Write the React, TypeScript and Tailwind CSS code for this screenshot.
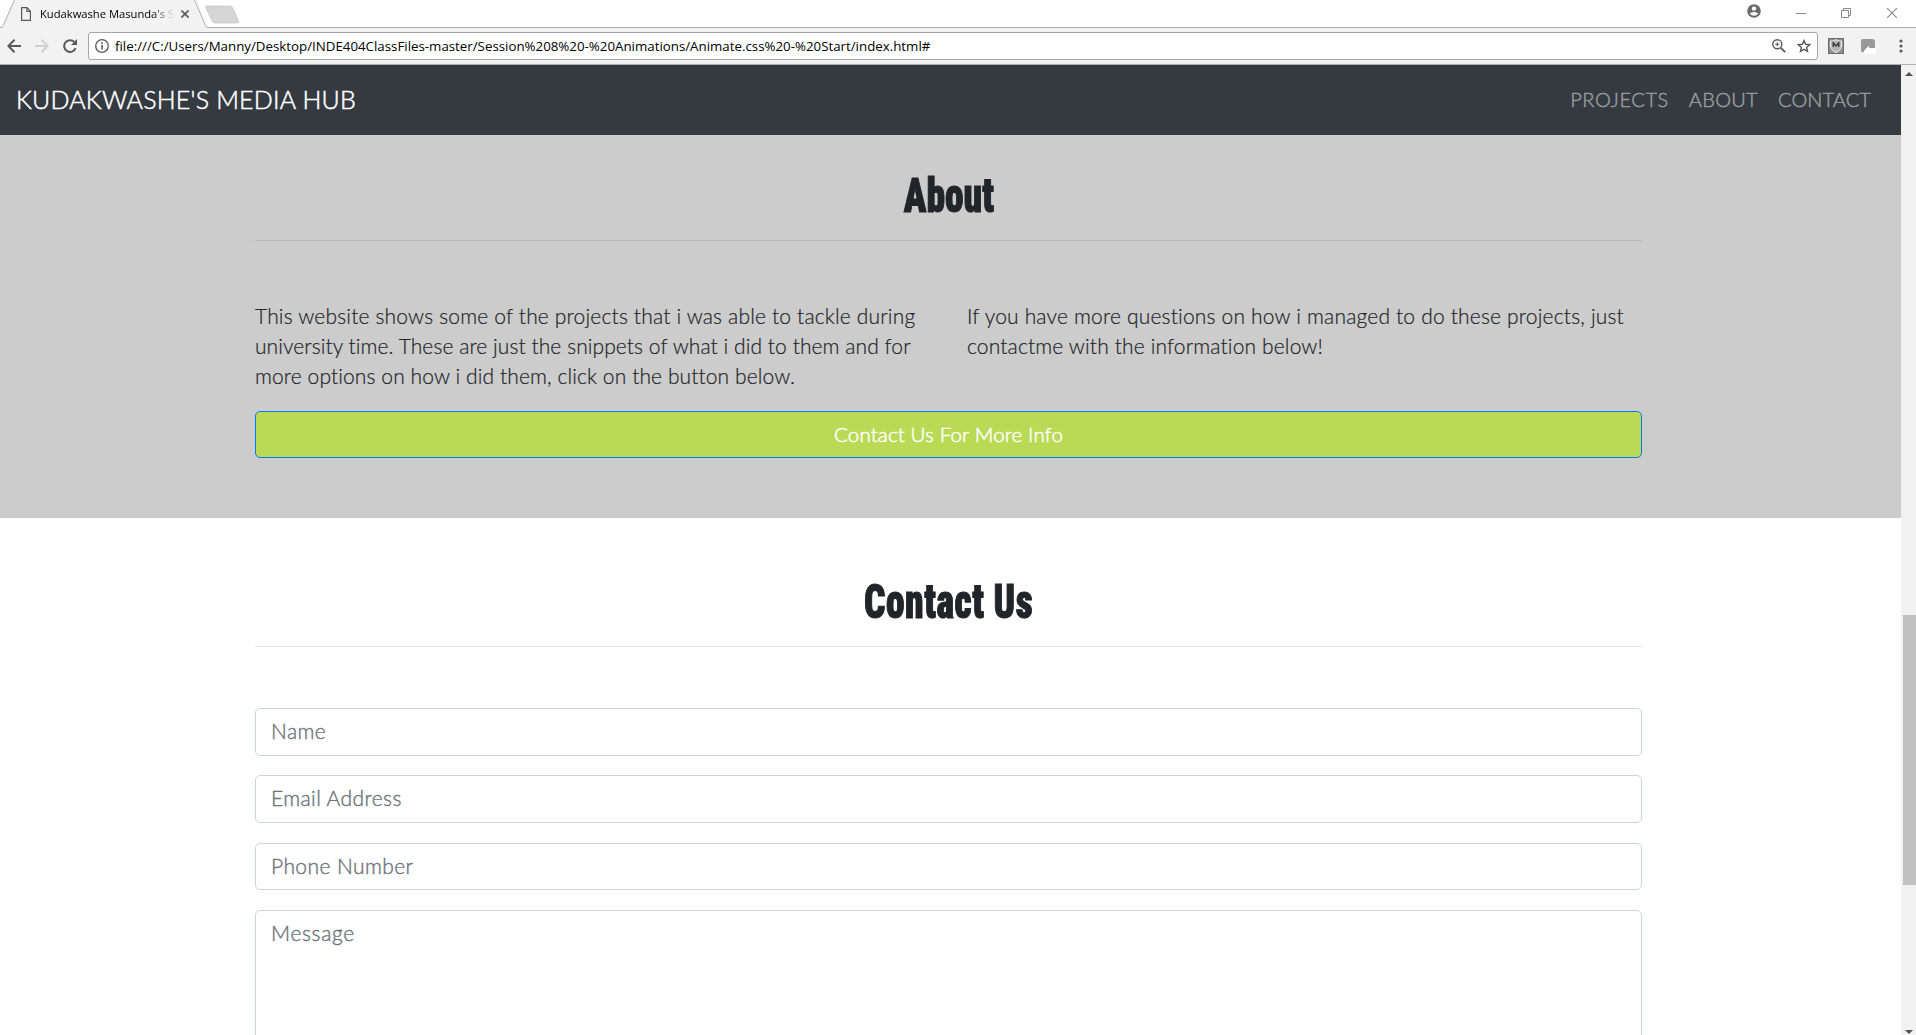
import type { ReactNode } from 'react';

function TabStrip() {
  return (
    <div className="relative flex h-7 shrink-0 items-start border-b border-[#adadad] bg-white">
      <div className="relative h-7 w-[208px]">
        <svg className="absolute left-0 top-0" width="208" height="28" viewBox="0 0 208 28" fill="none">
          <path d="M0 27.5H1.5Q2.6 27.3 3 26L13.5 2Q14.3 .3 15.5 -1H193.5Q194.8 .3 195.5 2L205.5 25.5Q206.3 27.5 208 27.5V29H0Z" fill="#f2f2f2" />
          <path d="M0 27.5H1Q2.3 27.3 3 26L13.5 2Q14.3 .3 15.5 -1M193.5 -1Q194.8 .3 195.5 2L205.5 25.5Q206.3 27.5 208 27.5" stroke="#adadad" />
        </svg>
        <div className="relative flex h-7 items-center pl-[21px]">
          <svg width="10" height="14" viewBox="0 0 10 14" fill="none" stroke="#5a5a5a" strokeWidth="1.2">
            <path d="M.6 .6H6L9.4 4.2V13.4H.6ZM5.9 .6V4.4H9.4" />
          </svg>
          <span className="ml-[9px] w-[134px] overflow-hidden whitespace-nowrap font-['Open_Sans'] text-[11.2px] leading-5 text-black [mask-image:linear-gradient(to_right,black_84%,transparent)]">
            Kudakwashe Masunda's S
          </span>
          <svg className="ml-[7px]" width="8" height="8" viewBox="0 0 8 8" stroke="#5a5a5a" strokeWidth="1.6">
            <path d="M.4 .4L7.6 7.6M7.6 .4L.4 7.6" />
          </svg>
        </div>
      </div>
      <svg className="-ml-[4px] mt-[5px]" width="36" height="19" viewBox="0 0 36 19">
        <path d="M2.5 1H26Q28 1 28.8 2.8L34.6 16Q35.3 18 33.5 18H11Q9 18 8.2 16.2L1.5 2.5Q1 1 2.5 1Z" fill="#d6d6d6" stroke="#c6c6c6" strokeWidth=".7" />
      </svg>
      <div className="ml-auto flex h-[26px] items-center">
        <svg className="-mt-[4px]" width="14" height="14" viewBox="0 0 14 14">
          <circle cx="7" cy="7" r="6.8" fill="#6b6b6b" />
          <circle cx="7" cy="4.6" r="2.2" fill="#fff" />
          <path d="M2.8 9.5Q4 7.9 7 7.9T11.2 9.5Q9.7 11.8 7 11.8T2.8 9.5Z" fill="#fff" />
        </svg>
        <svg className="ml-[35px]" width="10" height="11" viewBox="0 0 10 11"><path d="M0 5.5H10" stroke="#8c8c8c" /></svg>
        <svg className="ml-[35px]" width="10" height="10" viewBox="0 0 10 10" fill="none" stroke="#8c8c8c">
          <path d="M.5 2.5H7.5V9.5H.5ZM2.5 2.5V.5H9.5V7.5H7.5" />
        </svg>
        <svg className="ml-[36px] mr-[19px]" width="10" height="10" viewBox="0 0 10 10" stroke="#8c8c8c" strokeWidth="1.1"><path d="M0 0L10 10M10 0L0 10" /></svg>
      </div>
    </div>
  );
}

function Toolbar() {
  return (
    <div className="flex h-[37px] shrink-0 items-center border-b border-[#b0b0b0] bg-[#f2f2f2]">
      <svg className="ml-[7px]" width="14" height="14" viewBox="0 0 14 14" fill="none" stroke="#5a5a5a" strokeWidth="2"><path d="M14 7H1.5M7.5 .8L1.4 7L7.5 13.2" /></svg>
      <svg className="ml-[14px]" width="14" height="14" viewBox="0 0 14 14" fill="none" stroke="#d0d0d0" strokeWidth="2"><path d="M0 7H12.5M6.5 .8L12.6 7L6.5 13.2" /></svg>
      <svg className="ml-[14px]" width="15" height="14" viewBox="0 0 15 14" fill="none">
        <path d="M12.6 9.2A5.9 5.9 0 1 1 11.3 2.9" stroke="#5a5a5a" strokeWidth="2" />
        <path d="M14 0V6H8Z" fill="#5a5a5a" />
      </svg>
      <div className="ml-[10px] flex h-7 w-[1730px] items-center rounded-[3px] border border-[#a6a6a6] bg-white">
        <svg className="ml-[6px]" width="14" height="14" viewBox="0 0 14 14" fill="none" stroke="#5a5a5a"><circle cx="7" cy="7" r="6.3" strokeWidth="1.3" /><path d="M7 6.1V10.6M7 3.3V4.9" strokeWidth="1.6" /></svg>
        <span className="ml-[6px] whitespace-nowrap font-['Open_Sans'] text-[13.3px] leading-5 text-black">
          file:///C:/Users/Manny/Desktop/INDE404ClassFiles-master/Session%208%20-%20Animations/Animate.css%20-%20Start/index.html#
        </span>
        <svg className="ml-auto" width="14" height="14" viewBox="0 0 14 14" fill="none" stroke="#5a5a5a"><circle cx="5.3" cy="5.3" r="4.5" strokeWidth="1.4" /><path d="M8.8 8.8L13.2 13.2" strokeWidth="1.9" /><path d="M5.3 3.3V7.3M3.3 5.3H7.3" strokeWidth="1.1" /></svg>
        <svg className="ml-[11px] mr-[6px]" width="14" height="14" viewBox="0 0 14 14" fill="none" stroke="#5a5a5a" strokeWidth="1.4"><path d="M7 1.6L8.6 5.3L12.7 5.7L9.6 8.4L10.5 12.4L7 10.3L3.5 12.4L4.4 8.4L1.3 5.7L5.4 5.3Z" /></svg>
      </div>
      <svg className="ml-[10px]" width="16" height="16" viewBox="0 0 16 16">
        <rect x=".5" y=".5" width="15" height="15" fill="#8f8f8f" stroke="#6a6a6a" />
        <path d="M2.5 3Q6 3.2 8 1.6Q10 3.2 13.5 3V8Q13 12.5 8 14.6Q3 12.5 2.5 8Z" fill="#b5b5b5" stroke="#eee" />
        <path d="M5.3 9V5L8 8L10.7 5V9" fill="none" stroke="#3c3c3c" strokeWidth="1.5" />
      </svg>
      <svg className="ml-[16px]" width="16" height="16" viewBox="0 0 16 16">
        <path d="M6 10.5L9 8.5L16 10V16H3Z" fill="#fff" />
        <path d="M3 1H12Q15 1 15 4V10H9.5Q9 8.3 8.5 7.5Q8 9 6 10.5Q4 12 3.5 14.5Q1 14.5 1 12V3Q1 1 3 1Z" fill="#999" />
      </svg>
      <svg className="ml-[23px]" width="4" height="14" viewBox="0 0 4 14" fill="#5a5a5a"><circle cx="2" cy="2" r="1.6" /><circle cx="2" cy="7" r="1.6" /><circle cx="2" cy="12" r="1.6" /></svg>
    </div>
  );
}

function Navbar() {
  return (
    <nav className="flex h-[70px] shrink-0 items-center bg-[#343a40] pb-0.5 pl-4 pr-[30px]">
      <a className="text-[25px] font-light leading-[38px] tracking-[0.2px] text-white [-webkit-text-stroke:0.5px]">KUDAKWASHE'S MEDIA HUB</a>
      <div className="ml-auto flex gap-5 text-[20px] font-light leading-[30px] text-[#9a9da0] [-webkit-text-stroke:0.45px]">
        <a className="tracking-[0.6px]">PROJECTS</a>
        <a className="tracking-[0.3px]">ABOUT</a>
        <a className="tracking-[0.1px]">CONTACT</a>
      </div>
    </nav>
  );
}

function Heading({ children }: { children: ReactNode }) {
  return (
    <h2 className="flex w-[1387px] justify-center pt-px font-['Roboto_Condensed','Roboto'] text-[49px] font-black leading-[60px] text-[#212529]">
      <span className="scale-x-[0.765] [-webkit-text-stroke:1.1px]">{children}</span>
    </h2>
  );
}

function Field({ label }: { label: string }) {
  return <div className="h-[47.5px] rounded-[5px] border border-[#ced4da] bg-white px-[15px] pt-[7px] text-[21px] font-light leading-[30px] tracking-[0.4px] text-[#6c757d] [-webkit-text-stroke:0.4px]">{label}</div>;
}

function Scrollbar() {
  return (
    <div className="flex w-[15px] shrink-0 flex-col items-end bg-[#f1f1f1]">
      <svg className="mr-[3px] mt-[7px]" width="8" height="4" viewBox="0 0 8 4" fill="#505050"><path d="M4 0L8 4H0Z" /></svg>
      <div className="mt-[539px] h-[270px] w-[13px] bg-[#c1c1c1]" />
      <svg className="mb-[1px] mr-[3px] mt-auto" width="8" height="4" viewBox="0 0 8 4" fill="#505050"><path d="M4 4L8 0H0Z" /></svg>
    </div>
  );
}

export default function App() {
  return (
    <div className="flex h-[1035px] w-[1916px] flex-col overflow-hidden bg-white font-['Lato',sans-serif]">
      <TabStrip />
      <Toolbar />
      <div className="flex min-h-0 flex-1">
        <main className="flex min-w-0 flex-1 flex-col overflow-hidden">
          <Navbar />
          <section className="h-[383px] shrink-0 bg-[#ccc] px-[255px] pt-[30px]">
            <Heading>About</Heading>
            <hr className="mt-[14px] w-[1387px] border-[#b8b8b8]" />
            <div className="mt-[60px] flex w-[1387px] text-[21px] leading-[30px] text-[#212529]">
              <p className="w-[712px] whitespace-nowrap font-light [-webkit-text-stroke:0.2px]">
                <span className="block tracking-[0.17px]">This website shows some of the projects that i was able to tackle during</span>
                <span className="block tracking-[0.07px]">university time. These are just the snippets of what i did to them and for</span>
                <span className="block tracking-[0.1px]">more options on how i did them, click on the button below.</span>
              </p>
              <p className="whitespace-nowrap font-light [-webkit-text-stroke:0.2px]">
                <span className="block tracking-[0.18px]">If you have more questions on how i managed to do these projects, just</span>
                <span className="block tracking-[0.14px]">contactme with the information below!</span>
              </p>
            </div>
            <button className="mt-[20px] block h-[47px] w-[1387px] rounded-[5px] border border-[#007bff] bg-[#bada55] pb-0.5 text-[20.5px] font-light leading-[30px] tracking-[0.14px] text-white [-webkit-text-stroke:0.5px]">
              Contact Us For More Info
            </button>
          </section>
          <section className="px-[255px] pt-[53px]">
            <Heading><span className="tracking-[0.7px]">Contact Us</span></Heading>
            <hr className="mt-[14px] w-[1387px] border-[#e5e5e5]" />
            <div className="mt-[61px] flex w-[1387px] flex-col gap-[19.8px]">
              <Field label="Name" />
              <Field label="Email Address" />
              <Field label="Phone Number" />
              <div className="h-[190px] rounded-[5px] border border-[#ced4da] bg-white px-[15px] pt-[7px] text-[21px] font-light leading-[30px] tracking-[0.65px] text-[#6c757d] [-webkit-text-stroke:0.4px]">Message</div>
            </div>
          </section>
        </main>
        <Scrollbar />
      </div>
    </div>
  );
}
